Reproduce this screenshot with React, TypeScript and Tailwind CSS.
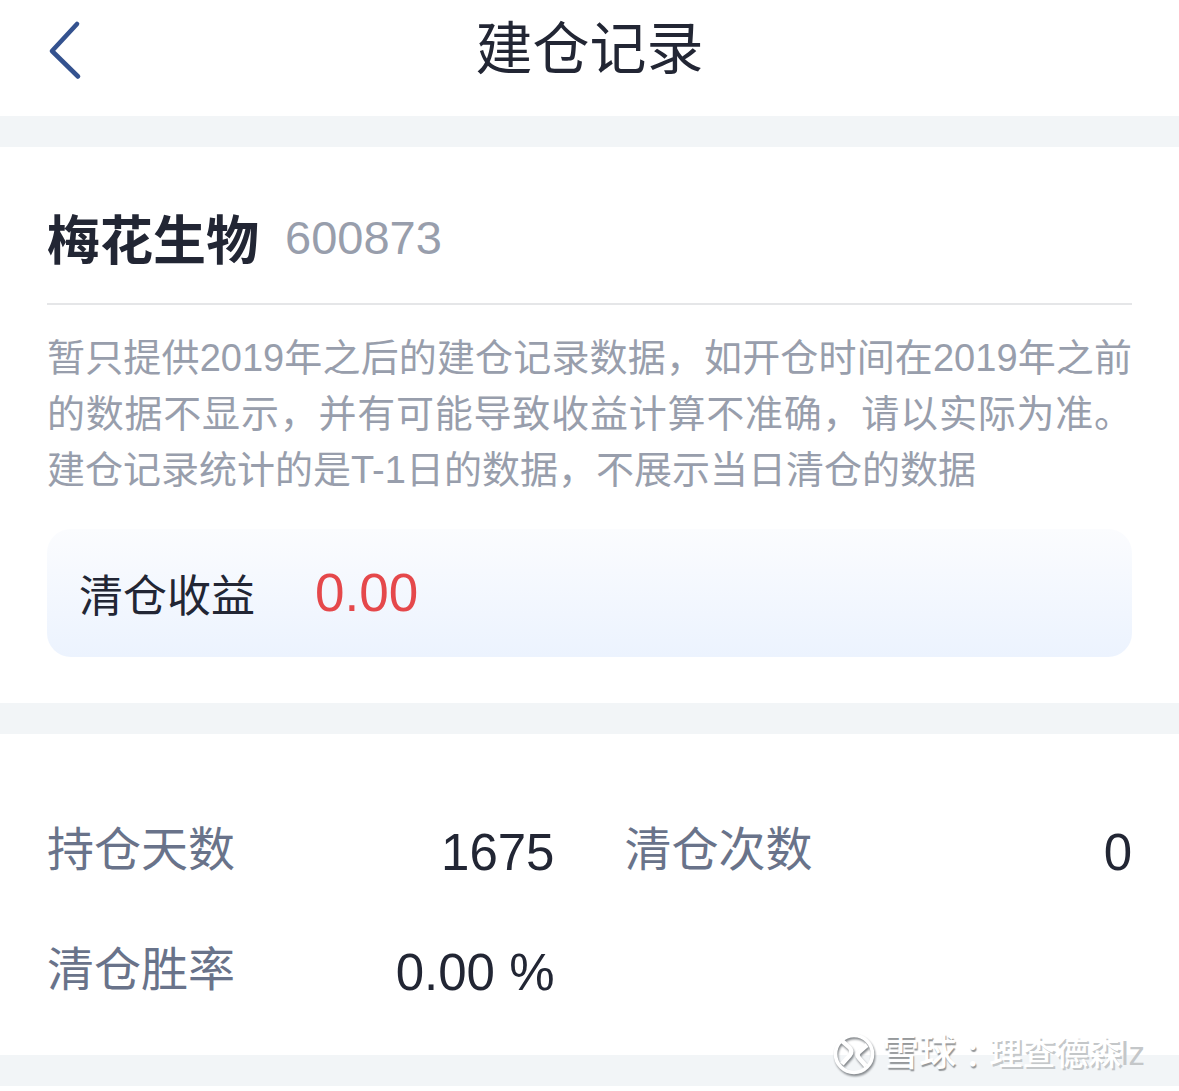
import React from 'react';

type Stat = {
	label: string;
	value: string;
};

const stock = { name: '梅花生物', code: '600873', profit: '0.00' };

const stats: Stat[] = [
	{ label: '持仓天数', value: '1675' },
	{ label: '清仓次数', value: '0' },
	{ label: '清仓胜率', value: '0.00 %' },
];

function Divider() {
	return <div className="h-[31px] bg-[#f2f5f7]" />;
}

function Header() {
	return (
		<header className="relative bg-white pt-[19px] pb-[37px]">
			<button type="button" aria-label="返回" className="absolute top-5 left-12 cursor-pointer">
				<svg className="w-9 h-15" viewBox="0 0 36 60" fill="none" stroke="#34528f" strokeWidth="4.6" strokeLinecap="round" strokeLinejoin="round">
					<path d="M29 4 4 31 30 56.500" />
				</svg>
			</button>
			<h1 className="text-center text-[57px] leading-[60px] text-[#222634]">建仓记录</h1>
		</header>
	);
}

function StatRow({ label, value }: Stat) {
	return (
		<div className="flex items-end justify-between">
			<dt className="text-[47px] leading-[60px] text-[#69738a]">{label}</dt>
			<dd className="text-[51px] leading-[54px] text-[#222634]">{value}</dd>
		</div>
	);
}

function Watermark() {
	return (
		<div className="absolute right-[34px] bottom-2 flex items-center font-medium leading-[48px] text-white [text-shadow:1px_2px_1px_#94979a]">
			<svg className="w-11 h-11 mr-1.5 drop-shadow-[1px_2px_1px_#808488]" viewBox="0 0 44 44" fill="none" stroke="#ffffff">
				<circle cx="22" cy="22" r="18.500" strokeWidth="3.6" />
				<path d="M9 8 17 15Q21 19 18 23L10 32" strokeWidth="4.400" />
				<path d="M35 13 27 20Q24 23 27 26L34 34" strokeWidth="4.400" />
			</svg>
			<span className="text-[37px]">雪球</span>
			<span className="text-[33px] font-['Noto_Sans_CJK_TC',sans-serif]" lang="zh-TW">：</span>
			<span className="text-[33px] [text-shadow:2px_2px_0px_#c4c7c9]">理查德森<span className="text-[#c4c7c9] [text-shadow:none]">lz</span></span>
		</div>
	);
}

export default function App() {
	return (
		<div className="relative bg-white font-['Liberation_Sans','Noto_Sans_CJK_SC',sans-serif]" lang="zh-CN">
			<Header />
			<Divider />
			<main>
				<section className="px-[47px] pt-[63px] pb-[46px]">
					<div className="flex items-start gap-[26px] pb-[29px] border-b-2 border-[#e5e6e8]">
						<h2 className="text-[53px] leading-[64px] font-bold text-[#222634]">{stock.name}</h2>
						<span className="text-[47px] leading-[56px] text-[#989eac]">{stock.code}</span>
					</div>
					<p className="mt-[25px] text-justify text-[38px] leading-[56px] text-[#989eac]">
						暂只提供2019年之后的建仓记录数据，如开仓时间在2019年之前的数据不显示，并有可能导致收益计算不准确，请以实际为准。建仓记录统计的是T-1日的数据，不展示当日清仓的数据
					</p>
					<div className="mt-[31px] flex items-end gap-[60px] rounded-3xl bg-linear-to-b from-[#fbfcfe] to-[#ecf3fe] px-8 py-8">
						<span className="text-[44px] leading-[56px] text-[#222634]">清仓收益</span>
						<span className="text-[53px] leading-[64px] text-[#e5484b]">{stock.profit}</span>
					</div>
				</section>
				<Divider />
				<section className="px-[47px] pt-[86px] pb-[55px]">
					<dl className="grid grid-cols-2 gap-x-[70px] gap-y-15">
						{stats.map((s) => (
							<StatRow key={s.label} {...s} />
						))}
					</dl>
				</section>
			</main>
			<Divider />
			<Watermark />
		</div>
	);
}
